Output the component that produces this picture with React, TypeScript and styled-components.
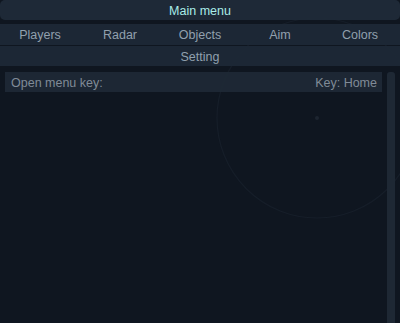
import styled, { createGlobalStyle } from 'styled-components';

const GlobalStyle = createGlobalStyle`
  html, body {
    margin: 0;
    padding: 0;
    background: #0f1620;
  }
  body {
    font-family: "Liberation Sans", Arial, sans-serif;
  }
  * {
    box-sizing: border-box;
  }
`;

const TABS = ['Players', 'Radar', 'Objects', 'Aim', 'Colors'];

const Screen = styled.div`
  position: relative;
  width: 400px;
  height: 323px;
  overflow: hidden;
  background: #0f1620;
  display: flex;
  flex-direction: column;
`;

const Radar = styled.svg`
  position: absolute;
  left: 0;
  top: 0;
  pointer-events: none;
`;

const TitleBar = styled.div`
  position: relative;
  height: 20px;
  padding-top: 2px;
  border-radius: 5px;
  background: rgba(31, 42, 56, 0.97);
  color: #a9ece8;
  font-size: 12.5px;
  display: flex;
  align-items: center;
  justify-content: center;
  margin-bottom: 4px;
`;

interface BarProps {
  h: number;
}

const Bar = styled.div<BarProps>`
  position: relative;
  height: ${(p) => p.h}px;
  padding-top: 1px;
  background: rgba(29, 40, 54, 0.97);
  color: #91a0ae;
  font-size: 12.5px;
  display: flex;
  align-items: center;
`;

const Tab = styled.div`
  flex: 1;
  text-align: center;
`;

const Divider = styled.div`
  height: 1px;
`;

const Content = styled.div`
  position: relative;
  flex: 1;
  display: flex;
  padding: 6px 5px 0 5px;
  gap: 5px;
`;

const List = styled.div`
  flex: 1;
`;

const KeyRow = styled.div`
  height: 20px;
  padding: 1px 5px 0 6px;
  background: rgba(30, 41, 53, 0.96);
  color: #808b97;
  font-size: 12.5px;
  display: flex;
  align-items: center;
  justify-content: space-between;
`;

const Scrollbar = styled.div`
  width: 8px;
  border-radius: 3px 3px 0 0;
  background: #1e2834;
`;

export default function App() {
  return (
    <>
      <GlobalStyle />
      <Screen>
        <Radar width={400} height={323}>
          <circle cx={317} cy={118} r={100} fill="none" stroke="#161e29" strokeWidth={1.2} />
          <circle cx={317} cy={118} r={2} fill="#1d2530" />
        </Radar>
        <TitleBar>Main menu</TitleBar>
        <Bar h={21}>
          {TABS.map((t) => <Tab key={t}>{t}</Tab>)}
        </Bar>
        <Divider />
        <Bar h={20}>
          <Tab>Setting</Tab>
        </Bar>
        <Content>
          <List>
            <KeyRow>
              <span>Open menu key:</span>
              <span>Key: Home</span>
            </KeyRow>
          </List>
          <Scrollbar />
        </Content>
      </Screen>
    </>
  );
}
